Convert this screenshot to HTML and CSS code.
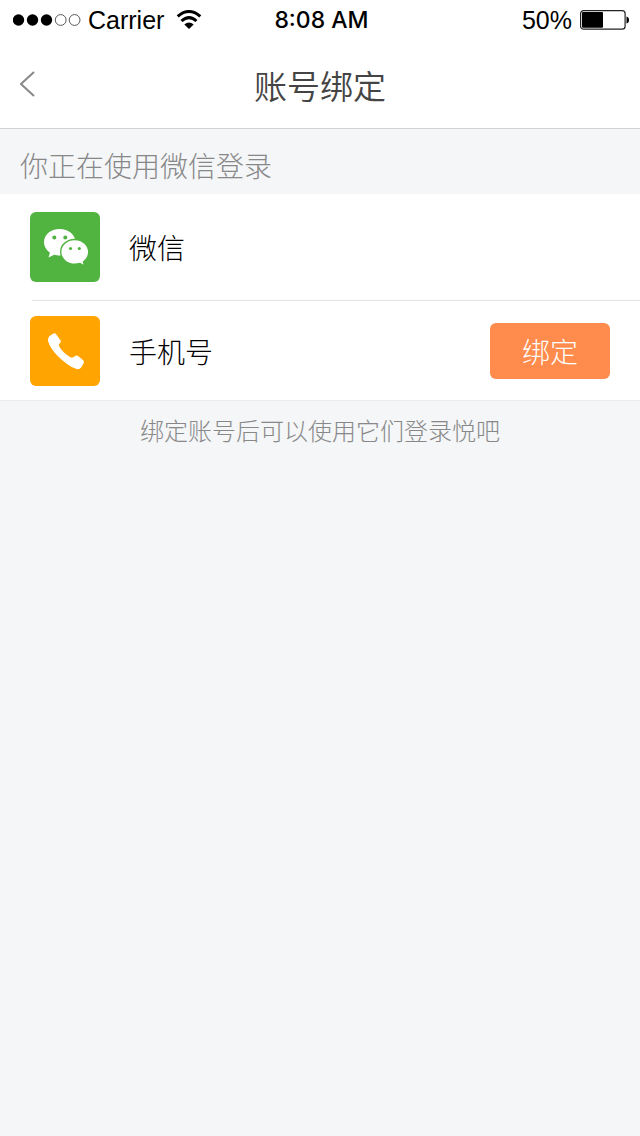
FILE: index.html
```html
<!DOCTYPE html>
<html lang="zh-CN">
<head>
<meta charset="utf-8">
<meta name="viewport" content="width=device-width, initial-scale=1">
<title>账号绑定</title>
<link rel="stylesheet" href="styles.css">
</head>
<body>
<header class="top">
  <div class="status">
    <div class="status-side">
      <svg class="signal" width="68" height="12" viewBox="0 0 68 12" aria-hidden="true">
        <circle cx="5.5" cy="6" r="5.7"/><circle cx="19.5" cy="6" r="5.7"/><circle cx="33.5" cy="6" r="5.7"/>
        <g fill="none" stroke="#333" stroke-width=".8"><circle cx="47.7" cy="6" r="5.4"/><circle cx="61.6" cy="6" r="5.4"/></g>
      </svg>
      <span class="carrier">Carrier</span>
      <svg class="wifi" width="26" height="20" viewBox="0 0 26 20" aria-hidden="true">
        <g fill="none" stroke="#000" stroke-width="3"><path d="M1.7 6.4Q13-3.4 24.3 6.4"/><path d="M5.5 11Q13 4.300 20.500 11"/></g>
        <path d="M8.300 14.500Q13 10.500 17.700 14.500L13 19Z"/>
      </svg>
    </div>
    <span class="time">8:08 AM</span>
    <div class="status-side status-right">
      <span>50%</span>
      <svg class="battery" width="50" height="20" viewBox="0 0 50 20" aria-hidden="true">
        <rect x=".6" y=".6" width="44.500" height="18.600" rx="3" fill="#fff" stroke="#222" stroke-width="1.200"/>
        <rect x="2" y="2" width="21" height="15.800" rx="1"/>
        <path d="M46.500 6.500Q49 7 49 10T46.500 13.500Z"/>
      </svg>
    </div>
  </div>
  <nav class="nav">
    <button class="back" type="button" aria-label="返回">
      <svg width="16" height="26" viewBox="0 0 16 26" fill="none" stroke="#888" stroke-width="2" aria-hidden="true"><path d="M14 1L1 13L14 25"/></svg>
    </button>
    <h1 class="title">账号绑定</h1>
  </nav>
</header>
<main>
  <h2 class="caption">你正在使用微信登录</h2>
  <ul class="accounts">
    <li class="account">
      <svg class="logo" viewBox="0 0 70 70" aria-hidden="true">
        <rect width="70" height="70" rx="6" fill="#51b340"/>
        <path fill="#fff" d="M29.500 17C20.700 17 14 22.900 14 30.300C14 34.600 16.200 38 19.900 40.700L18.500 45.500L24.200 42.700C26 43.200 27.700 43.500 30 43.500C38.500 43.500 45.500 38 45.500 30.300S38.500 17 29.500 17Z"/>
        <path fill="#fff" stroke="#51b340" stroke-width="1.400" d="M44.700 27.500C36.800 27.500 30.700 33 30.700 39.900C30.700 46.900 37 52.300 44.700 52.300C46.600 52.300 48.300 52 49.900 51.500L54.800 54.200L53.500 49.700C56.700 47.400 58.700 44 58.700 39.900C58.700 33 52.500 27.500 44.700 27.500Z"/>
        <g fill="#51b340"><circle cx="24.300" cy="25.500" r="2"/><circle cx="35.300" cy="25.500" r="2"/><circle cx="40.500" cy="36.500" r="1.600"/><circle cx="49.300" cy="36.500" r="1.600"/></g>
      </svg>
      <span class="name">微信</span>
    </li>
    <li class="account">
      <svg class="logo" viewBox="0 0 70 70" aria-hidden="true">
        <rect width="70" height="70" rx="6" fill="#ffa400"/>
        <path fill="#fff" d="M19.300 20.200L23 17.700Q24.800 16.700 26.100 18.200L30.500 24.200Q31.500 25.600 30.300 26.700L28.800 28.600Q28.700 30.200 30.500 32.500C33 36 36.700 39.300 40.700 41.400L43 41.400L45.500 39.700Q46.800 39 48.100 40L53.200 44.300Q54.600 45.600 53.700 47.100L51.500 51Q49.800 53.700 46.500 53.100C40.500 51 33 45.500 27 39.300C22.500 34.500 19.500 30 18 25Q17.700 21.700 19.300 20.200Z"/>
      </svg>
      <span class="name">手机号</span>
      <button class="bind" type="button">绑定</button>
    </li>
  </ul>
  <p class="note">绑定账号后可以使用它们登录悦吧</p>
</main>
</body>
</html>
```
FILE: styles.css
```css
* {
  box-sizing: border-box;
}

body {
  margin: 0;
  min-height: 100vh;
  background: #f4f6f8;
  color: #000;
  font-family: "Liberation Sans", "Noto Sans CJK SC", sans-serif;
  font-weight: 300;
}

.top {
  background: #fff;
  border-bottom: 1px solid #d2d2d2;
}

.status {
  display: grid;
  grid-template-columns: 1fr auto 1fr;
  align-items: center;
  height: 40px;
  padding: 0 10px 0 13px;
  font-size: 25px;
  font-weight: 400;
  line-height: 40px;
}

.status-side {
  display: flex;
  align-items: center;
}

.status-right {
  justify-content: flex-end;
  gap: 8px;
}

.carrier {
  margin: 0 12px 0 7px;
}

.time {
  font-family: Inter, "Liberation Sans", sans-serif;
  font-size: 23px;
  font-weight: 500;
}

.nav {
  display: grid;
  grid-template-columns: 60px 1fr 60px;
  align-items: center;
  height: 88px;
}

.back {
  display: flex;
  align-items: center;
  height: 88px;
  padding: 0 20px;
  border: 0;
  background: none;
}

.title {
  margin: 0;
  padding-top: 8px;
  color: #444;
  font-size: 33px;
  font-weight: 350;
  line-height: 80px;
  text-align: center;
}

.caption {
  margin: 0;
  padding: 12px 20px 0;
  color: #888;
  font-size: 28px;
  font-weight: 300;
  line-height: 53px;
}

.accounts {
  margin: 0;
  padding: 0;
  border-bottom: 1px solid #ebebeb;
  background: #fff;
  list-style: none;
}

.account {
  display: flex;
  align-items: center;
  gap: 29px;
  min-height: 100px;
  padding: 0 30px;
}

.account:first-child {
  min-height: 106px;
}

.account + .account {
  margin-left: 32px;
  padding-left: 0;
  border-top: 1px solid #e3e3e3;
}

.account + .account .logo {
  margin-left: -2px;
}

.logo {
  flex: none;
  width: 70px;
  height: 70px;
}

.name {
  padding-top: 6px;
  font-size: 28px;
  line-height: 40px;
}

.bind {
  width: 120px;
  height: 56px;
  margin-left: auto;
  padding: 0;
  border: 0;
  border-radius: 6px;
  background: #ff8b4c;
  color: #fff;
  font: inherit;
  font-size: 28px;
}

.note {
  margin: 0;
  padding: 11px 20px;
  color: #888;
  font-size: 24px;
  line-height: 40px;
  text-align: center;
}
```
